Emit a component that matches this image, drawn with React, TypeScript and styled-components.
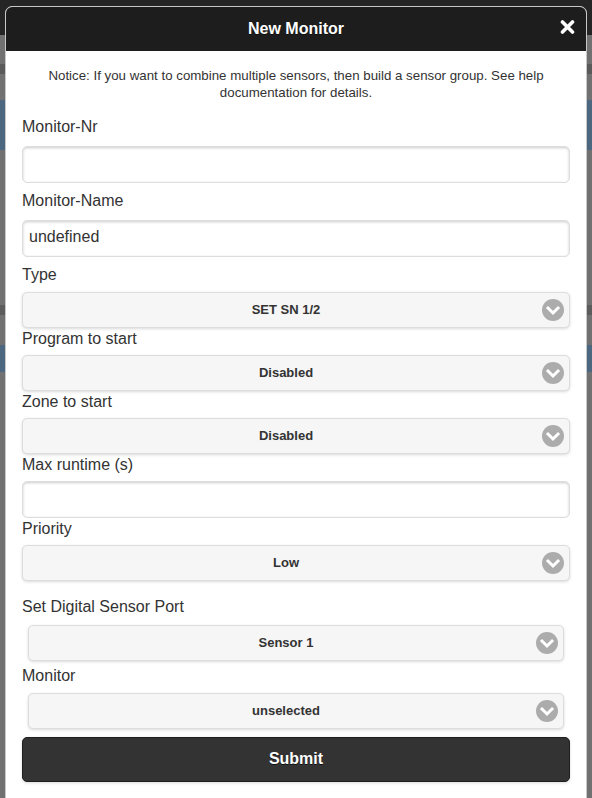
import styled, { createGlobalStyle } from 'styled-components'

const GlobalStyle = createGlobalStyle`
  html, body {
    margin: 0;
    padding: 0;
  }
  body {
    min-height: 100vh;
    overflow: hidden;
    font-family: 'Liberation Sans', Arial, sans-serif;
    color: #333;
    background:
      linear-gradient(to bottom, #252525 0 35px, transparent 35px),
      linear-gradient(to bottom, transparent 64px, #5a5a5a 64px 74px, transparent 74px),
      linear-gradient(to bottom, transparent 100px, #4b6880 100px 150px, transparent 150px),
      linear-gradient(to bottom, transparent 305px, #5c5c5c 305px 315px, transparent 315px),
      linear-gradient(to bottom, transparent 345px, #4b6880 345px 372px, transparent 372px),
      #717171;
  }
`

const Popup = styled.div`
  margin: 6px 5px 0;
  background: #fff;
  border: 1px solid #c8c8c8;
  border-radius: 7px 7px 0 0;
  overflow: hidden;
`

const Header = styled.div`
  position: relative;
  height: 44px;
  background: #1d1d1d;
  display: flex;
  align-items: center;
  justify-content: center;
`

const Title = styled.h1`
  margin: 0;
  font-size: 16px;
  font-weight: bold;
  color: #fff;
  text-shadow: 0 1px 0 #111;
`

const CloseButton = styled.button`
  position: absolute;
  right: 11px;
  top: 12px;
  width: 16px;
  height: 16px;
  padding: 0;
  border: 0;
  background: none;
  display: flex;
  align-items: center;
  justify-content: center;
`

const Content = styled.div`
  padding: 16px 16px 16px;
`

const Notice = styled.p`
  margin: 0 0 15px;
  font-size: 13.3px;
  line-height: 17px;
  text-align: center;
  color: #333;
`

const Field = styled.div<{ $gap: number }>`
  margin-bottom: ${(p) => p.$gap}px;
`

const Label = styled.label<{ $space: number }>`
  display: block;
  font-size: 16px;
  line-height: 21px;
  color: #333;
  margin-bottom: ${(p) => p.$space}px;
`

const Input = styled.input`
  display: block;
  box-sizing: border-box;
  width: 100%;
  height: 37px;
  margin: 0;
  padding: 0 6px 3px;
  font-family: inherit;
  font-size: 16px;
  color: #333;
  background: #fff;
  border: 1px solid #ddd;
  border-radius: 5px;
  box-shadow: inset 0 1px 3px rgba(0, 0, 0, 0.2);
  outline: none;
`

const SelectBox = styled.div<{ $inset?: boolean }>`
  position: relative;
  box-sizing: border-box;
  height: 36px;
  margin: ${(p) => (p.$inset ? '0 6px' : '0')};
  padding: 0 40px 2px 20px;
  display: flex;
  align-items: center;
  justify-content: center;
  background: #f6f6f6;
  border: 1px solid #ddd;
  border-radius: 5px;
  box-shadow: 0 1px 3px rgba(0, 0, 0, 0.15);
`

const SelectText = styled.span`
  font-size: 13px;
  font-weight: bold;
  color: #333;
  text-shadow: 0 1px 0 #f3f3f3;
`

const Arrow = styled.span`
  position: absolute;
  right: 5px;
  top: 50%;
  margin-top: -11px;
  width: 22px;
  height: 22px;
  display: flex;
`

const Submit = styled.button`
  display: block;
  box-sizing: border-box;
  width: 100%;
  height: 45px;
  margin: 0;
  padding-bottom: 2px;
  font-family: inherit;
  font-size: 16px;
  font-weight: bold;
  color: #fff;
  text-shadow: 0 1px 0 #111;
  background: #333;
  border: 1px solid #1f1f1f;
  border-radius: 5px;
  box-shadow: 0 1px 3px rgba(0, 0, 0, 0.15);
`

function ArrowIcon() {
  return (
    <svg width="22" height="22" viewBox="0 0 22 22">
      <circle cx="11" cy="11" r="11" fill="#acacac" />
      <path
        d="M6 9 L11 14 L16 9"
        fill="none"
        stroke="#fff"
        strokeWidth="3"
        strokeLinecap="square"
      />
    </svg>
  )
}

function Select({ value, inset }: { value: string; inset?: boolean }) {
  return (
    <SelectBox $inset={inset}>
      <SelectText>{value}</SelectText>
      <Arrow>
        <ArrowIcon />
      </Arrow>
    </SelectBox>
  )
}

type Row = {
  label: string
  kind: 'input' | 'select'
  value: string
  space: number
  gap: number
  inset?: boolean
}

const rows: Row[] = [
  { label: 'Monitor-Nr', kind: 'input', value: '', space: 9, gap: 7 },
  { label: 'Monitor-Name', kind: 'input', value: 'undefined', space: 9, gap: 7 },
  { label: 'Type', kind: 'select', value: 'SET SN 1/2', space: 7, gap: 0 },
  { label: 'Program to start', kind: 'select', value: 'Disabled', space: 6, gap: 0 },
  { label: 'Zone to start', kind: 'select', value: 'Disabled', space: 6, gap: 0 },
  { label: 'Max runtime (s)', kind: 'input', value: '', space: 6, gap: 0 },
  { label: 'Priority', kind: 'select', value: 'Low', space: 6, gap: 15 },
  { label: 'Set Digital Sensor Port', kind: 'select', value: 'Sensor 1', space: 8, gap: 4, inset: true },
  { label: 'Monitor', kind: 'select', value: 'unselected', space: 7, gap: 8, inset: true },
]

export default function App() {
  return (
    <>
      <GlobalStyle />
      <Popup>
        <Header>
          <Title>New Monitor</Title>
          <CloseButton aria-label="Close">
            <svg width="15" height="14" viewBox="0 0 15 14">
              <path
                d="M2.5 2 L12.5 12 M12.5 2 L2.5 12"
                stroke="#fff"
                strokeWidth="3.6"
                strokeLinecap="round"
              />
            </svg>
          </CloseButton>
        </Header>
        <Content>
          <Notice>
            Notice: If you want to combine multiple sensors, then build a sensor
            group. See help documentation for details.
          </Notice>
          {rows.map((r) => (
            <Field key={r.label} $gap={r.gap}>
              <Label $space={r.space}>{r.label}</Label>
              {r.kind === 'input' ? (
                <Input type="text" defaultValue={r.value} />
              ) : (
                <Select value={r.value} inset={r.inset} />
              )}
            </Field>
          ))}
          <Submit>Submit</Submit>
        </Content>
      </Popup>
    </>
  )
}
